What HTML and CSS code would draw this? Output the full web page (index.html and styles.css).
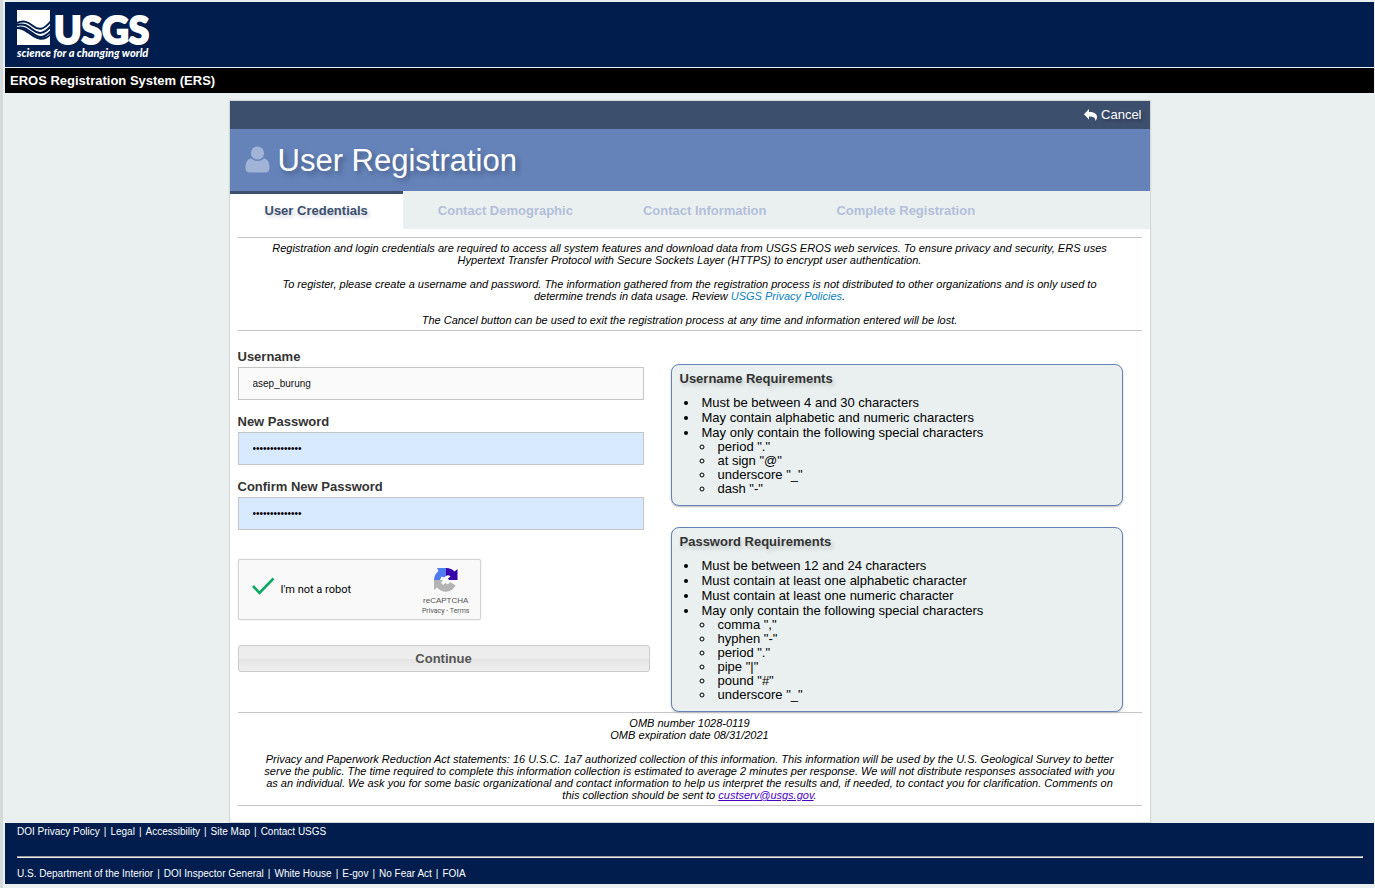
FILE: index.html
```html
<!DOCTYPE html>
<html lang="en">
<head>
<meta charset="utf-8">
<title>EROS Registration System</title>
<link rel="stylesheet" href="styles.css">
</head>
<body>
<header class="site-header">
  <a class="logo" href="#" aria-label="USGS home">
    <svg width="142" height="52" viewBox="0 0 142 52">
      <path fill="#fff" d="M0 1H33V36H0Z"/>
      <g fill="none" stroke="#001d4d" stroke-width="2">
        <path d="M0 14C7 11 11 13 16 17S26 22 34 12"/>
        <path d="M0 16C7 14 11 17 16 21S26 26 34 17"/>
        <path d="M0 19C6 17 10 20 16 24.500S26 30 34 22"/>
      </g>
      <path fill="#001d4d" d="M0 20C7 20 12 26 18 29S29 31 33 27V25C29 29 23 30 17 26S7 18 0 18Z"/>
      <text class="logo-name" x="37" y="35">USGS</text>
      <text class="logo-tag" x="0" y="48">science for a changing world</text>
    </svg>
  </a>
</header>
<div class="system-bar">EROS Registration System (ERS)</div>
<main class="panel">
  <nav class="panel-nav">
    <a href="#"><svg width="13" height="12" viewBox="0 0 13 12"><path fill="#fff" d="M5 0V3C10 3 13 4.500 13 8C13 10 12 11 11.400 12C11.500 8.500 9.500 7.500 5 7.500V10.500L0 5.200Z"/></svg>Cancel</a>
  </nav>
  <div class="title">
    <svg width="25" height="27" viewBox="0 0 25 27"><g fill="#a1b3d6"><circle cx="12.500" cy="7" r="6.600"/><path d="M6 12.500C2 13 .5 17 .5 22Q.5 26.500 5 26.500H20Q24.500 26.500 24.500 22C24.500 17 23 13 19 12.500Q16 15 12.500 15T6 12.500Z"/></g></svg>
    <h1>User Registration</h1>
  </div>
  <ol class="steps">
    <li class="active">User Credentials</li>
    <li>Contact Demographic</li>
    <li>Contact Information</li>
    <li>Complete Registration</li>
  </ol>
  <div class="content">
    <div class="notice intro">
      <p>Registration and login credentials are required to access all system features and download data from USGS EROS web services. To ensure privacy and security, ERS uses Hypertext Transfer Protocol with Secure Sockets Layer (HTTPS) to encrypt user authentication.</p>
      <p>To register, please create a username and password. The information gathered from the registration process is not distributed to other organizations and is only used to determine trends in data usage. Review <a class="policy" href="#">USGS Privacy Policies</a>.</p>
      <p>The Cancel button can be used to exit the registration process at any time and information entered will be lost.</p>
    </div>
    <div class="columns">
      <form class="credentials">
        <label for="username">Username</label>
        <input id="username" type="text" value="asep_burung">
        <label for="password">New Password</label>
        <input id="password" type="password" value="abcdefghijklmn">
        <label for="confirm">Confirm New Password</label>
        <input id="confirm" type="password" value="abcdefghijklmn">
        <div class="captcha">
          <svg class="tick" width="23" height="18" viewBox="0 0 23 18"><path fill="none" stroke="#0aa860" stroke-width="2.600" d="M1 9L7.500 15.800L21.500 1.500"/></svg>
          <span class="robot">I'm not a robot</span>
          <div class="brand">
            <svg width="24" height="24" viewBox="0 0 24 24">
              <path fill="#3700ab" d="M12 0C16 0 18.500 1.500 20.500 3.500L23.500 1V12H15L14 10.500L16.500 8.500Q14.500 6.500 12 8Z"/>
              <path fill="#4f7bf0" d="M12 0H3L4.500 3C2 5 0 8 0 12H6L7.500 8.500L10 9.500L12 8Z"/>
              <path fill="#b3b3b3" d="M0 12V22L3 19.500C9 26 18 24.500 21.500 17.500L16 14L14 16.500L11.500 15L9 17L7 14.500L9 12Z"/>
            </svg>
            <span>reCAPTCHA</span>
            <small><a href="#">Privacy</a> - <a href="#">Terms</a></small>
          </div>
        </div>
        <button type="button">Continue</button>
      </form>
      <div class="rules">
        <section class="rule-box">
          <h2>Username Requirements</h2>
          <ul>
            <li>Must be between 4 and 30 characters</li>
            <li>May contain alphabetic and numeric characters</li>
            <li>May only contain the following special characters
              <ul>
                <li>period "."</li>
                <li>at sign "@"</li>
                <li>underscore "_"</li>
                <li>dash "-"</li>
              </ul>
            </li>
          </ul>
        </section>
        <section class="rule-box">
          <h2>Password Requirements</h2>
          <ul>
            <li>Must be between 12 and 24 characters</li>
            <li>Must contain at least one alphabetic character</li>
            <li>Must contain at least one numeric character</li>
            <li>May only contain the following special characters
              <ul>
                <li>comma ","</li>
                <li>hyphen "-"</li>
                <li>period "."</li>
                <li>pipe "|"</li>
                <li>pound "#"</li>
                <li>underscore "_"</li>
              </ul>
            </li>
          </ul>
        </section>
      </div>
    </div>
    <div class="notice omb">
      <p>OMB number 1028-0119<br>OMB expiration date 08/31/2021</p>
      <p>Privacy and Paperwork Reduction Act statements: 16 U.S.C. 1a7 authorized collection of this information. This information will be used by the U.S. Geological Survey to better serve the public. The time required to complete this information collection is estimated to average 2 minutes per response. We will not distribute responses associated with you as an individual. We ask you for some basic organizational and contact information to help us interpret the results and, if needed, to contact you for clarification. Comments on this collection should be sent to <a class="mail" href="#">custserv@usgs.gov</a>.</p>
    </div>
  </div>
</main>
<footer class="site-footer">
  <ul>
    <li><a href="#">DOI Privacy Policy</a></li>
    <li><a href="#">Legal</a></li>
    <li><a href="#">Accessibility</a></li>
    <li><a href="#">Site Map</a></li>
    <li><a href="#">Contact USGS</a></li>
  </ul>
  <hr>
  <ul>
    <li><a href="#">U.S. Department of the Interior</a></li>
    <li><a href="#">DOI Inspector General</a></li>
    <li><a href="#">White House</a></li>
    <li><a href="#">E-gov</a></li>
    <li><a href="#">No Fear Act</a></li>
    <li><a href="#">FOIA</a></li>
  </ul>
</footer>
</body>
</html>
```
FILE: styles.css
```css
* { box-sizing: border-box; }
body {
  margin: 0;
  padding: 2px 1px 4px 2px;
  border-left: 3px solid #d5dbdb;
  background: #eaf0f0;
  color: #000;
  font: 13px/15px "Liberation Sans", Arial, sans-serif;
}
a { color: inherit; text-decoration: none; }
h1, h2, p, ul, ol { margin: 0; padding: 0; }
svg { display: block; flex: none; overflow: visible; }

.site-header {
  display: flex;
  padding: 7px 12px 6px;
  background: #001d4d;
}
.logo-name {
  font: 900 37px Lato, "Liberation Sans", sans-serif;
  fill: #fff;
  stroke: #fff;
  stroke-width: 2px;
}
.logo-tag {
  font: italic 900 11px Lato, "Liberation Sans", sans-serif;
  fill: #fff;
}
.system-bar {
  margin-top: 1px;
  padding: 5px;
  background: #000;
  color: #fff;
  font-weight: bold;
}

.panel {
  max-width: 920px;
  margin: 8px auto 1px;
  background: #fff;
  box-shadow: 0 0 1px 1px #d2d9d9;
}
.panel-nav {
  display: flex;
  justify-content: flex-end;
  padding: 6px 8px 7px;
  background: #3c4f6d;
  color: #fff;
}
.panel-nav a {
  display: flex;
  align-items: center;
  gap: 4px;
  text-shadow: 2px 2px 3px #2a3850;
}
.title {
  display: flex;
  align-items: center;
  gap: 8px;
  padding: 10px 15px 12px;
  background: #6583b9;
  color: #fff;
}
.title h1 {
  padding-top: 4px;
  font-size: 31px;
  line-height: 36px;
  font-weight: normal;
  text-shadow: 3px 3px 5px #465c85;
}
.steps {
  display: flex;
  background: #eaf0f0;
  list-style: none;
  color: #b3bfda;
  font-weight: bold;
}
.steps li { padding: 12px 35px 11px; }
.steps .active {
  padding-top: 9px;
  border-top: 3px solid #3c4f6d;
  background: #fff;
  color: #3c4f6d;
  text-shadow: 2px 2px 4px #c5cad4;
}

.content { padding: 8px 8px 16px; }
.notice {
  padding: 4px 22px;
  border: solid #c5c5c5;
  border-width: 1px 0;
  font-size: 11px;
  line-height: 12px;
  font-style: italic;
  text-align: center;
}
.notice p + p { margin-top: 12px; }
.policy { color: #0782c1; }
.mail { color: #4b00c8; text-decoration: underline; }

.columns {
  display: grid;
  grid-template-columns: 412fr 452fr;
  gap: 21px;
  padding: 18px 19px 0 0;
}
.credentials { display: flex; flex-direction: column; }
.credentials label {
  margin-bottom: 3px;
  color: #333;
  font-weight: bold;
}
.credentials input {
  height: 33px;
  margin: 0 6px 14px 0;
  padding: 0 14px;
  border: 1px solid #c5c5c5;
  border-radius: 0;
  background: #fafafa;
  color: #111;
  font: 10px "Liberation Sans", Arial, sans-serif;
}
.credentials input[type="password"] { background: #d8eaff; color: #000; }
.captcha {
  display: flex;
  align-items: center;
  width: 243px;
  margin: 15px 0 25px;
  padding: 8px 10px 3px 13px;
  border: 1px solid #d3d3d3;
  border-radius: 2px;
  background: #f9f9f9;
  box-shadow: 0 0 2px #ddd;
  font-family: Roboto, sans-serif;
}
.tick { margin-bottom: 12px; }
.robot { flex: 1; padding: 0 0 5px 6px; font-size: 11px; }
.brand {
  display: flex;
  flex-direction: column;
  align-items: center;
  color: #555;
  font-size: 8px;
  line-height: 10px;
}
.brand svg { margin-bottom: 4px; }
.brand span { font-family: "Liberation Sans", sans-serif; }
.brand small { font-size: 7px; }
.credentials button {
  height: 27px;
  border: 1px solid #cbcbcb;
  border-radius: 3px;
  background: linear-gradient(#ededed 50%, #e4e4e4 50%, #efefef);
  color: #555;
  font: bold 13px "Liberation Sans", Arial, sans-serif;
}

.rules {
  display: flex;
  flex-direction: column;
  gap: 21px;
  padding-top: 15px;
}
.rule-box {
  padding: 6px 8px 9px;
  border: 1px solid #6583b9;
  border-radius: 8px;
  background: #eaf0f0;
  box-shadow: 0 1px 2px #bbb;
}
.rule-box h2 {
  margin-bottom: 9px;
  color: #333;
  font-size: 13px;
  line-height: 15px;
  text-shadow: 2px 3px 4px #c0c5c5;
}
.rule-box ul { padding-left: 19px; }
.rule-box li { padding-left: 3px; }
.rule-box ul ul { padding-left: 13px; line-height: 14px; }

.site-footer {
  padding: 3px 11px 4px 12px;
  background: #001d4d;
  color: #fff;
  font-size: 10px;
  line-height: 12px;
}
.site-footer ul { display: flex; list-style: none; }
.site-footer li + li::before { content: "|"; padding: 0 4px; }
.site-footer hr {
  margin: 18px 0 10px;
  border: 1px solid;
  border-color: #999 #eee #eee #999;
}
```
